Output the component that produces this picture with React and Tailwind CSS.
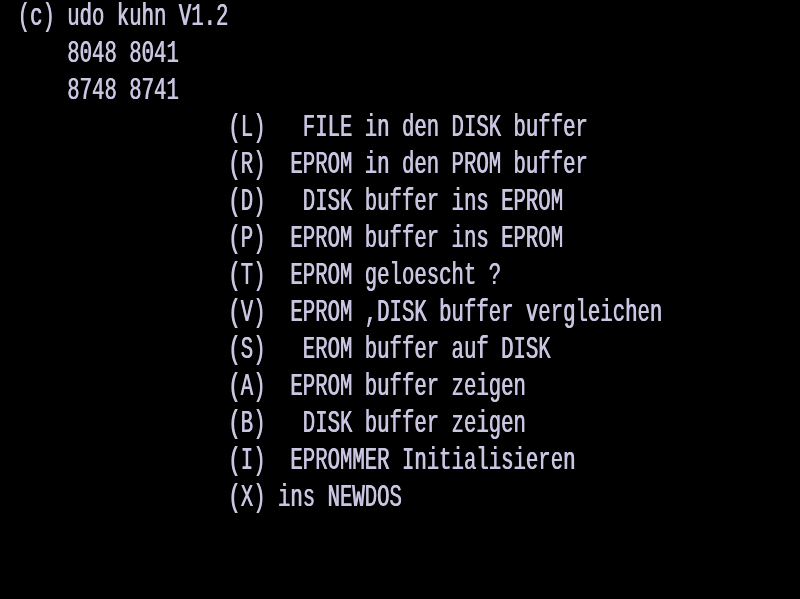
import React from 'react';

// TRS-80 style menu screen: 12.4px cells, 37px rows
const lines = [
  ' (c) udo kuhn V1.2',
  '     8048 8041',
  '     8748 8741',
  '                  (L)   FILE in den DISK buffer',
  '                  (R)  EPROM in den PROM buffer',
  '                  (D)   DISK buffer ins EPROM',
  '                  (P)  EPROM buffer ins EPROM',
  '                  (T)  EPROM geloescht ?',
  '                  (V)  EPROM ,DISK buffer vergleichen',
  '                  (S)   EROM buffer auf DISK',
  '                  (A)  EPROM buffer zeigen',
  '                  (B)   DISK buffer zeigen',
  '                  (I)  EPROMMER Initialisieren',
  '                  (X) ins NEWDOS',
];

const App = () => {
  return (
    <div className="w-[800px] h-[599px] bg-black overflow-hidden">
      <div className="-mt-[2px] pl-[5px] font-['Liberation_Mono',monospace] text-[20.67px] text-[#cac6e2] blur-[0.4px] [text-shadow:0.6px_0_0_#cac6e2]">
        {lines.map((line, i) => (
          <div key={i} className="h-[37px] leading-[37px] whitespace-pre">
            <span className="inline-block scale-y-[1.55]">{line}</span>
          </div>
        ))}
      </div>
    </div>
  );
};

export default App;
